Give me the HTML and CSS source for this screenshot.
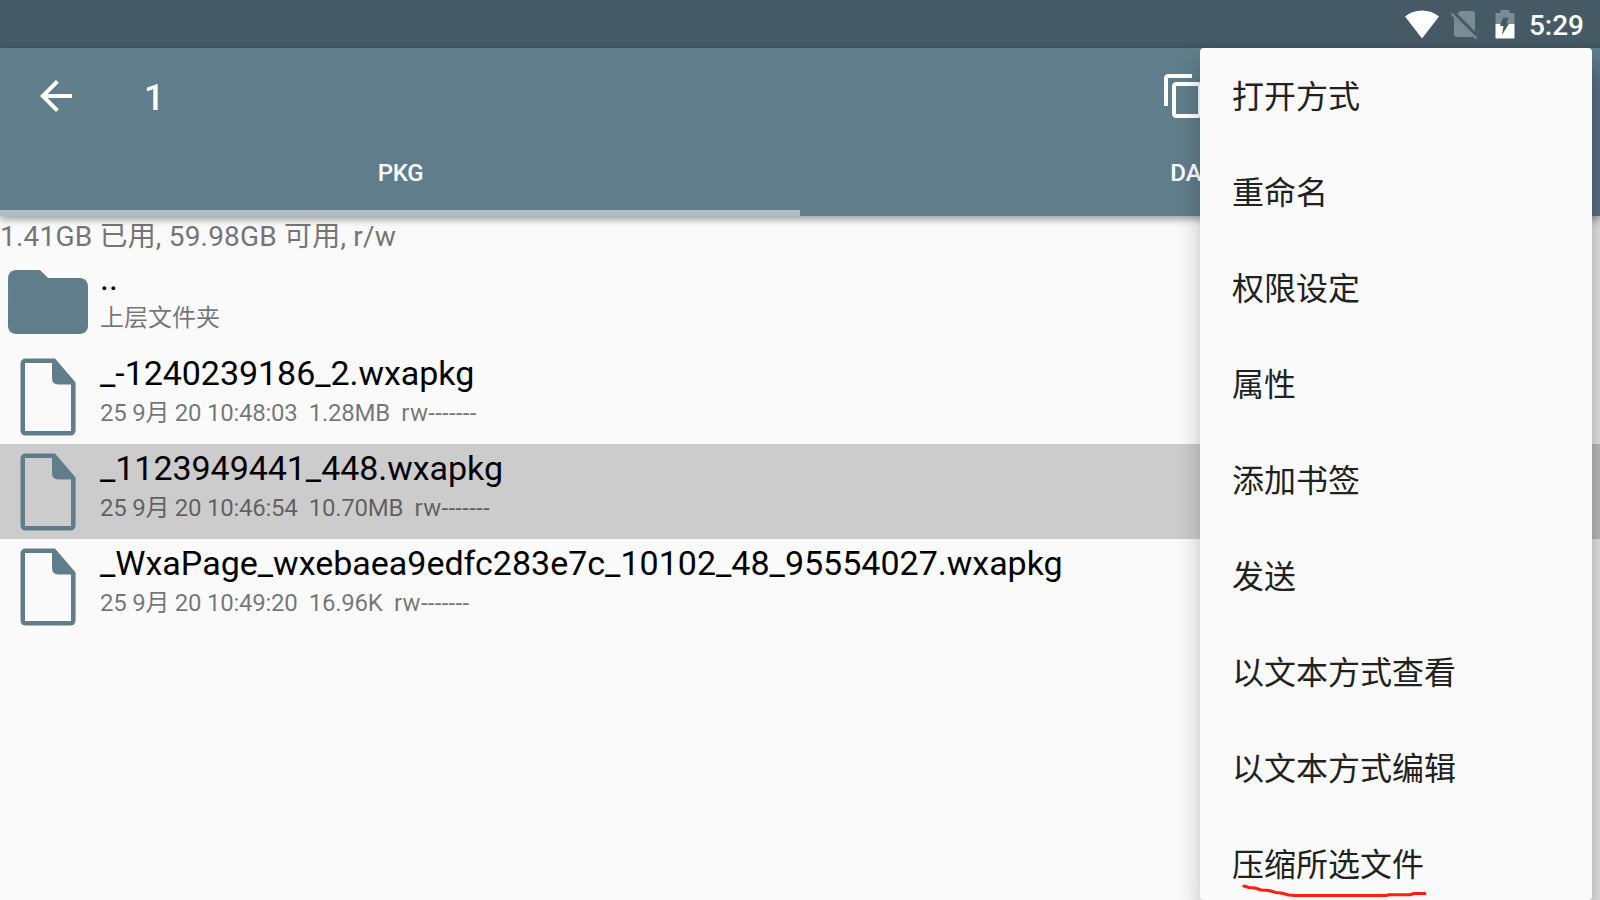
FILE: index.html
```
<!DOCTYPE html>
<html lang="zh-CN">
<head>
    <meta charset="UTF-8">
    <meta name="viewport" content="width=device-width, initial-scale=1.0">
    <title>文件管理器</title>
    <link rel="stylesheet" href="styles.css">
</head>
<body>
    <svg class="symbols" width="0" height="0">
        <symbol id="icon-file" viewBox="0 0 96 95">
            <path d="M55 9H26q-5.500 0-5.500 5.500V80.500q0 5.500 5.500 5.500H70q5.600 0 5.600-5.500V33zM52 13.500V28.500q0 6.500 6.500 6.500H71V81.500H25V13.500z" fill-rule="evenodd"/>
        </symbol>
    </svg>

    <div class="status-bar">
        <svg class="wifi" width="36" height="30" viewBox="0 0 36 30">
            <path d="M1 6.500C10-1.600 26-1.600 35 6.500L18 28.500z"/>
        </svg>
        <svg class="sim" width="28" height="30" viewBox="0 0 28 30">
            <path d="M9 1H21q3 0 3 3V21.500L6.300 3.800zM3 7.500L22.500 27H6q-3 0-3-3z"/>
            <path d="M0.500 3.500L25.500 28.500" fill="none" stroke="currentColor" stroke-width="2"/>
        </svg>
        <svg class="battery" width="20" height="30" viewBox="0 0 20 30">
            <path class="battery-empty" d="M5.500 0h9v3H19.500V14H0.500V3h5z"/>
            <path d="M0.500 14h19V28.500H0.500z"/>
            <path class="bolt" d="M8 7.500h5.500l-2 6H14L7 25l1.500-9H5z"/>
        </svg>
        <span class="clock">5:29</span>
    </div>

    <header class="app-bar">
        <div class="toolbar">
            <svg class="icon" viewBox="0 0 24 24">
                <path d="M20 11H7.830l5.590-5.590L12 4l-8 8 8 8 1.410-1.410L7.830 13H20z"/>
            </svg>
            <span class="title">1</span>
            <svg class="icon copy" viewBox="0 0 24 24">
                <path d="M16 1H4c-1.100 0-2 .9-2 2v14h2V3h12V1zm3 4H8c-1.100 0-2 .9-2 2v14c0 1.100.9 2 2 2h11c1.100 0 2-.9 2-2V7c0-1.100-.9-2-2-2zm0 16H8V7h11v14z"/>
            </svg>
        </div>
        <nav class="tabs">
            <div class="tab active">PKG</div>
            <div class="tab">DATA</div>
        </nav>
    </header>

    <main class="files">
        <div class="storage">1.41GB 已用, 59.98GB 可用, r/w</div>
        <div class="row">
            <svg class="file-icon" viewBox="0 0 24 24">
                <path d="M10 4H4c-1.100 0-1.990.9-1.990 2L2 18c0 1.100.9 2 2 2h16c1.100 0 2-.9 2-2V8c0-1.100-.9-2-2-2h-8l-2-2z"/>
            </svg>
            <div class="info">
                <div class="name">..</div>
                <div class="meta folder">上层文件夹</div>
            </div>
        </div>
        <div class="row">
            <svg class="file-icon"><use href="#icon-file"/></svg>
            <div class="info">
                <div class="name">_-1240239186_2.wxapkg</div>
                <div class="meta">25 9月 20 10:48:03  1.28MB  <span class="mode">rw-------</span></div>
            </div>
        </div>
        <div class="row selected">
            <svg class="file-icon"><use href="#icon-file"/></svg>
            <div class="info">
                <div class="name">_1123949441_448.wxapkg</div>
                <div class="meta">25 9月 20 10:46:54  10.70MB  <span class="mode">rw-------</span></div>
            </div>
        </div>
        <div class="row">
            <svg class="file-icon"><use href="#icon-file"/></svg>
            <div class="info">
                <div class="name long">_WxaPage_wxebaea9edfc283e7c_10102_48_95554027.wxapkg</div>
                <div class="meta">25 9月 20 10:49:20  16.96K  <span class="mode">rw-------</span></div>
            </div>
        </div>
    </main>

    <!-- Overflow menu -->
    <ul class="menu">
        <li>打开方式</li>
        <li>重命名</li>
        <li>权限设定</li>
        <li>属性</li>
        <li>添加书签</li>
        <li>发送</li>
        <li>以文本方式查看</li>
        <li>以文本方式编辑</li>
        <li>压缩所选文件</li>
    </ul>

    <!-- Hand-drawn underline below the last item -->
    <svg class="underline" width="190" height="16" viewBox="0 0 190 16">
        <path d="M5 2L10 3.500 16 4 22 6 30 6.500 37 8.500 42 9 50 11 56 11.500H147L150 10.700H171L175 9.500H186"/>
    </svg>
</body>
</html>
```

FILE: styles.css
```
* {
    margin: 0;
    padding: 0;
    box-sizing: border-box;
}

body {
    position: relative;
    height: 100vh;
    overflow: hidden;
    background: #fafafa;
    font-family: Roboto, "Noto Sans CJK SC", sans-serif;
}

svg {
    display: block;
    flex: none;
    fill: currentColor;
}

.symbols {
    position: absolute;
}

/* Status bar */
.status-bar {
    display: flex;
    align-items: center;
    justify-content: flex-end;
    height: 48px;
    padding: 2px 16px 0 0;
    background: #455a64;
    color: #fff;
}

.sim {
    margin-left: 11px;
    color: #7d8c93;
}

.battery {
    margin-left: 16px;
}

.battery-empty {
    fill: #7d8c93;
}

.bolt {
    fill: #455a64;
}

.clock {
    margin-left: 14px;
    padding-top: 2px;
    font-size: 28px;
    font-weight: 500;
    line-height: 32px;
}

/* App bar */
.app-bar {
    position: relative;
    height: 168px;
    background: #607d8b;
    color: #fff;
    box-shadow: 0 3px 8px rgba(0, 0, 0, 0.4);
}

.toolbar {
    display: flex;
    align-items: center;
    height: 96px;
    padding: 0 392px 0 32px;
}

.icon {
    width: 48px;
    height: 48px;
}

.title {
    flex: 1;
    padding: 4px 0 0 64px;
    font-size: 36px;
    font-weight: 500;
    line-height: 40px;
}

.tabs {
    display: grid;
    grid-template-columns: 1fr 1fr;
    height: 72px;
}

.tab {
    padding-top: 14px;
    border-bottom: 6px solid transparent;
    font-size: 24px;
    font-weight: 500;
    line-height: 30px;
    text-align: center;
}

.tab.active {
    padding-left: 1px;
    border-color: #b0bec5;
    letter-spacing: -0.4px;
}

/* File list */
.storage {
    height: 38px;
    color: #757575;
    font-size: 28px;
    line-height: 42px;
    letter-spacing: 0.2px;
    white-space: pre;
}

.row {
    display: flex;
    height: 95px;
}

.row.selected {
    background: #ccc;
}

.file-icon {
    width: 96px;
    height: 96px;
    color: #607d8b;
}

.info {
    padding: 4px 0 0 4px;
}

.name {
    height: 40px;
    color: #000;
    font-size: 34px;
    line-height: 40px;
    letter-spacing: -0.05px;
    white-space: pre;
}

.name.long {
    letter-spacing: 0;
}

.meta {
    height: 38px;
    color: rgba(0, 0, 0, 0.54);
    font-size: 24px;
    line-height: 40px;
    letter-spacing: -0.26px;
    white-space: pre;
}

.meta.folder {
    letter-spacing: 0;
}

.mode {
    letter-spacing: 0.28px;
}

/* Overflow menu */
.menu {
    position: absolute;
    top: 48px;
    right: 8px;
    width: 392px;
    height: 852px;
    overflow: hidden;
    border-radius: 4px;
    background: #fafafa;
    box-shadow: 0 14px 24px rgba(0, 0, 0, 0.22), 14px 18px 20px rgba(0, 0, 0, 0.14);
    list-style: none;
}

.menu li {
    height: 96px;
    padding-left: 32px;
    color: #212121;
    font-size: 32px;
    line-height: 98px;
}

.underline {
    position: absolute;
    left: 1239px;
    top: 884px;
    fill: none;
    stroke: #ff1e10;
    stroke-width: 3;
    stroke-linecap: round;
    stroke-linejoin: round;
}
```
